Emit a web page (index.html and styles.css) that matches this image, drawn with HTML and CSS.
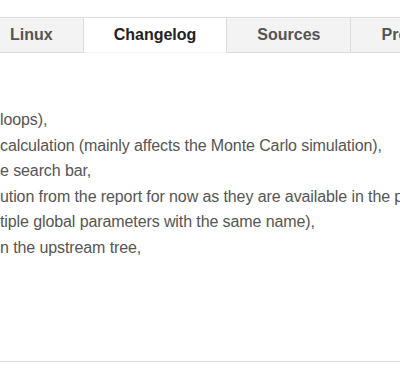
FILE: index.html
```html
<!DOCTYPE html>
<html lang="en">

<head>
    <meta charset="UTF-8">
    <meta name="viewport" content="width=device-width, initial-scale=1.0">
    <title>Downloads</title>
    <link rel="stylesheet" href="styles.css">
</head>

<body>
    <nav class="tabs">
        <a class="tab" href="#linux">Linux</a>
        <a class="tab active" href="#changelog">Changelog</a>
        <a class="tab" href="#sources">Sources</a>
        <a class="tab" href="#previous">Previous versions</a>
    </nav>

    <section class="panel" id="changelog">
        <ul class="changes">
            <li>loops),</li>
            <li>calculation (mainly affects the Monte Carlo simulation),</li>
            <li>e search bar,</li>
            <li>ution from the report for now as they are available in the plots,</li>
            <li>tiple global parameters with the same name),</li>
            <li>n the upstream tree,</li>
        </ul>
    </section>
</body>

</html>
```

FILE: styles.css
```css
* {
    box-sizing: border-box;
}

body {
    margin: 0;
    background-color: #fff;
    font-family: "Liberation Sans", Arial, sans-serif;
    font-size: 16px;
    color: #555;
    overflow: hidden;
}

/* tab strip, scrolled a bit to the left */
.tabs {
    display: flex;
    margin-top: 17px;
    margin-left: -20px;
    white-space: nowrap;
}

.tab {
    display: block;
    flex: none;
    padding: 7px 30px;
    line-height: 20px;
    font-weight: bold;
    color: #555;
    text-decoration: none;
    background-color: #f3f3f3;
    border: 1px solid #dcdcdc;
    border-left: none;
}

.tab.active {
    background-color: #fff;
    color: #222;
    border-bottom-color: #f4f4f4;
}

.panel {
    padding: 54px 0 100px;
    border-bottom: 1px solid #dcdcdc;
}

.changes {
    list-style: none;
    margin: 0;
    padding: 0;
    line-height: 1.6;
    letter-spacing: -0.1px;
    white-space: nowrap;
}
```
